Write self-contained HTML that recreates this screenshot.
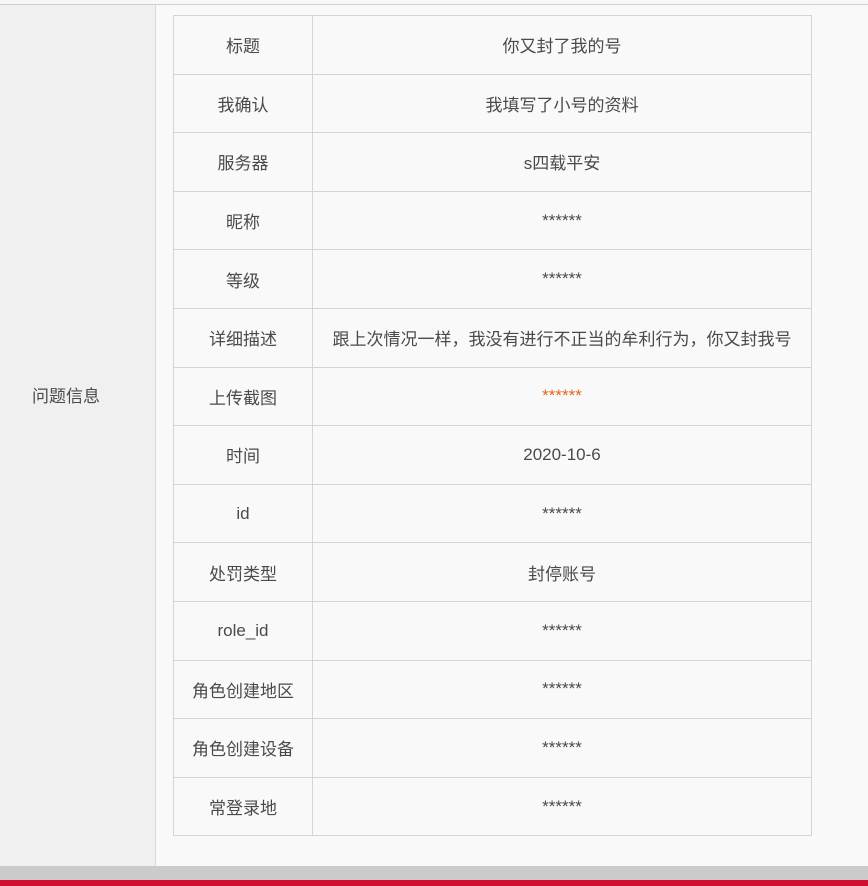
<!DOCTYPE html><html><head><meta charset="utf-8"><style>
body{margin:0;width:868px;height:886px;overflow:hidden;background:#f9f9f9;font-family:"Liberation Sans","Noto Sans CJK SC",sans-serif;color:#4a4a4a;position:relative}
.top{position:absolute;left:0;top:0;width:868px;height:4px;background:#f7f7f7;border-bottom:1px solid #d0d0d0}
.left{position:absolute;left:0;top:5px;width:155px;height:861px;background:#f0f0f0;border-right:1px solid #d8d8d8}
.lbl{position:absolute;left:0;width:132px;top:382px;text-align:center;font-size:17px}
table{position:absolute;left:173px;top:15px;border-collapse:collapse;width:639px;font-size:17px}
td{border:1px solid #d4d4d4;height:57.6px;padding:0;text-align:center;background:#f9f9f9}
td:first-child{width:138px}
.gray{position:absolute;left:0;top:866px;width:868px;height:14px;background:#cbcbcb}
.red{position:absolute;left:0;top:880px;width:868px;height:6px;background:#d01030}
</style></head><body>
<div class="top"></div><div class="left"></div><div class="lbl">问题信息</div>
<table>
<tr><td>标题</td><td>你又封了我的号</td></tr>
<tr><td>我确认</td><td>我填写了小号的资料</td></tr>
<tr><td>服务器</td><td>s四载平安</td></tr>
<tr><td>昵称</td><td>******</td></tr>
<tr><td>等级</td><td>******</td></tr>
<tr><td>详细描述</td><td>跟上次情况一样，我没有进行不正当的牟利行为，你又封我号</td></tr>
<tr><td>上传截图</td><td style="color:#e8661a">******</td></tr>
<tr><td>时间</td><td>2020-10-6</td></tr>
<tr><td>id</td><td>******</td></tr>
<tr><td>处罚类型</td><td>封停账号</td></tr>
<tr><td>role_id</td><td>******</td></tr>
<tr><td>角色创建地区</td><td>******</td></tr>
<tr><td>角色创建设备</td><td>******</td></tr>
<tr><td>常登录地</td><td>******</td></tr>
</table>
<div class="gray"></div><div class="red"></div>
</body></html>
